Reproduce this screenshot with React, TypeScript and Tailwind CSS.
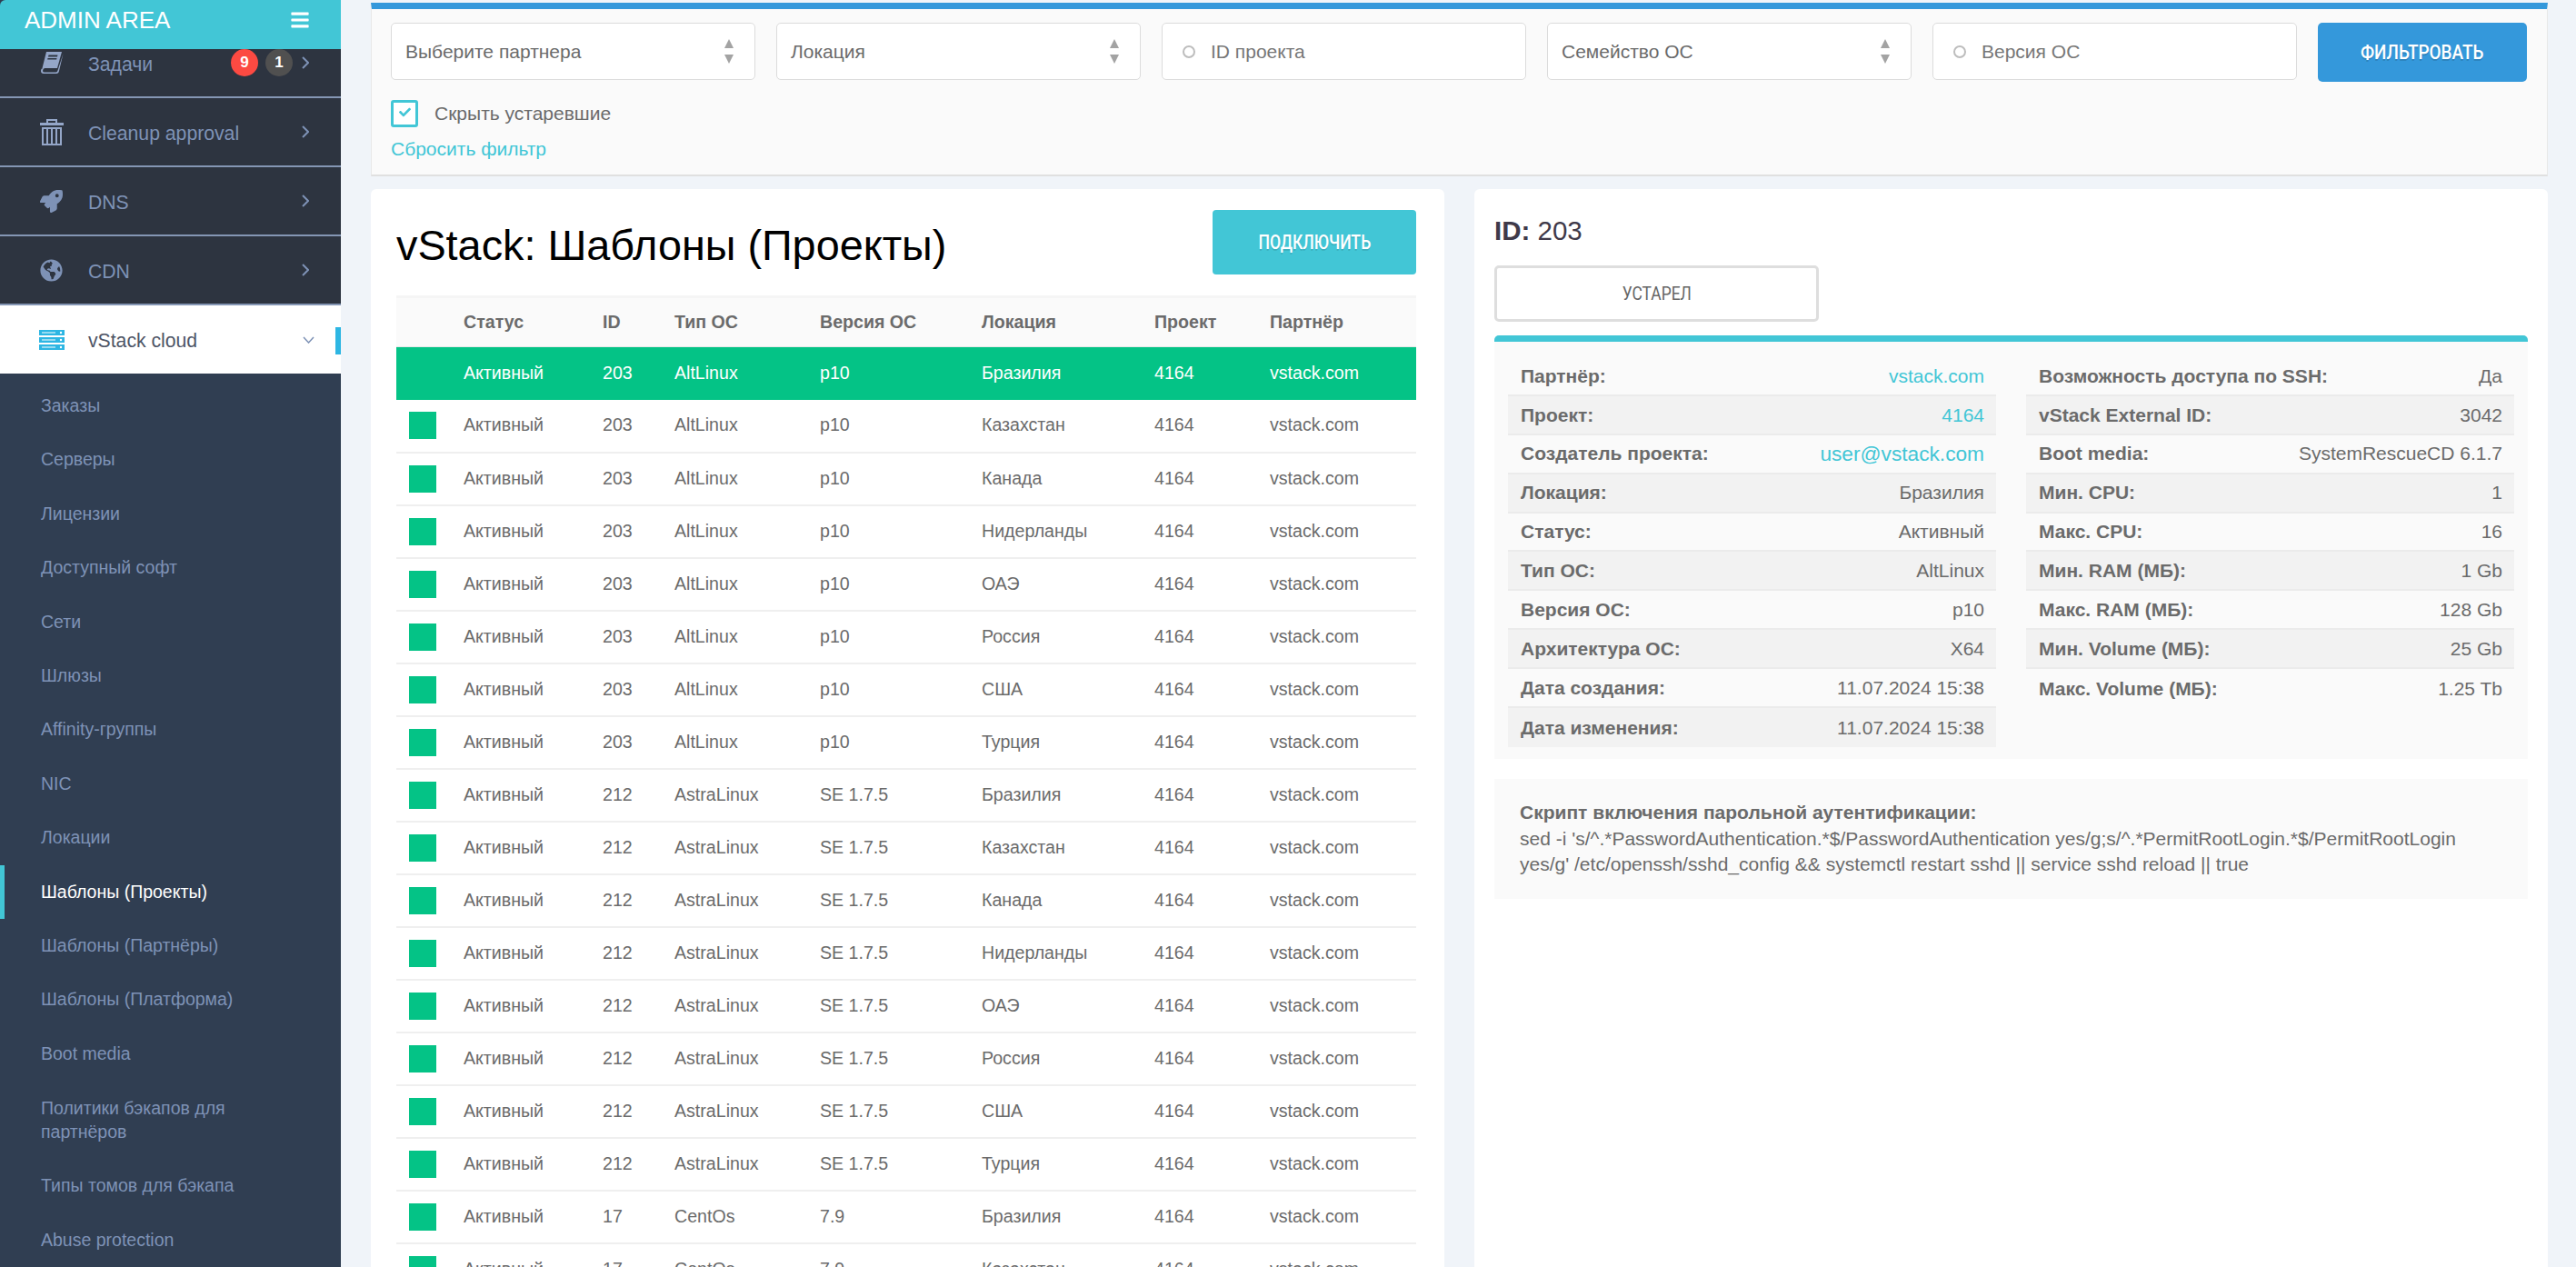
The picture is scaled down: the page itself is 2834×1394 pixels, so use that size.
import { FaRocket, FaGlobeAmericas, FaCheck, FaBars } from 'react-icons/fa'
import type { ReactNode } from 'react'

const sans = '[font-family:"Liberation_Sans",Arial,sans-serif]'

const subItems = [
  'Заказы', 'Серверы', 'Лицензии', 'Доступный софт', 'Сети', 'Шлюзы', 'Affinity-группы', 'NIC', 'Локации',
]
const subItemsAfter = ['Шаблоны (Партнёры)', 'Шаблоны (Платформа)', 'Boot media']

const locations = ['Бразилия', 'Казахстан', 'Канада', 'Нидерланды', 'ОАЭ', 'Россия', 'США', 'Турция']

const rows = [
  ...locations.map((loc) => ({ id: '203', os: 'AltLinux', ver: 'p10', loc })),
  ...locations.map((loc) => ({ id: '212', os: 'AstraLinux', ver: 'SE 1.7.5', loc })),
  { id: '17', os: 'CentOs', ver: '7.9', loc: 'Бразилия' },
  { id: '17', os: 'CentOs', ver: '7.9', loc: 'Казахстан' },
]

const leftInfo: [string, ReactNode][] = [
  ['Партнёр:', <span className="text-[#42c6d6]">vstack.com</span>],
  ['Проект:', <span className="text-[#42c6d6]">4164</span>],
  ['Создатель проекта:', <span className="text-[#42c6d6] text-[22.7px]">user@vstack.com</span>],
  ['Локация:', 'Бразилия'],
  ['Статус:', 'Активный'],
  ['Тип ОС:', 'AltLinux'],
  ['Версия ОС:', 'p10'],
  ['Архитектура ОС:', 'X64'],
  ['Дата создания:', '11.07.2024 15:38'],
  ['Дата изменения:', '11.07.2024 15:38'],
]

const rightInfo: [string, ReactNode][] = [
  ['Возможность доступа по SSH:', 'Да'],
  ['vStack External ID:', '3042'],
  ['Boot media:', 'SystemRescueCD 6.1.7'],
  ['Мин. CPU:', '1'],
  ['Макс. CPU:', '16'],
  ['Мин. RAM (МБ):', '1 Gb'],
  ['Макс. RAM (МБ):', '128 Gb'],
  ['Мин. Volume (МБ):', '25 Gb'],
  ['Макс. Volume (МБ):', '1.25 Tb'],
]

function BookIcon() {
  return (
    <svg width="26" height="24" viewBox="0 0 26 24" fill="#94a6c8">
      <path d="M7 0h17L19 18H2.500z" />
      <path d="M9.500 3.500h10l-.5 2h-10zM8.500 7h10l-.3 1.500h-10z" fill="#2d3440" />
      <path d="M25.500 2L21 21q-.5 3-3 3H4q-3 0-3-3t3-3h1q-2 1-2 3 0 1.500 2 1.500h12.500q1.500 0 2-2z" />
    </svg>
  )
}

function TrashIcon() {
  return (
    <svg width="26" height="29" viewBox="0 0 26 29" fill="#94a6c8">
      <path d="M7 0h12v4h7v3H0V4h7zm2 2v2h8V2z" fillRule="evenodd" />
      <path d="M2 9h22v20H2zm2 2v16h3V11zm5 0v16h3V11zm5 0v16h3V11zm5 0v16h3V11z" fillRule="evenodd" />
    </svg>
  )
}

function Chevron() {
  return (
    <svg width="8" height="14" viewBox="0 0 8 14" fill="none" stroke="#7e92b6" strokeWidth="2">
      <path d="M1 1l6 6-6 6" />
    </svg>
  )
}

function TopItem({ icon, label, badges }: { icon: ReactNode; label: string; badges?: boolean }) {
  return (
    <div className="h-[76px] flex items-center border-b-2 border-[#8496b4] text-[#7e92b6]">
      <div className="w-[97px] pl-[44px] flex items-center text-[25px]">{icon}</div>
      <span className="text-[21.2px] pt-[4px]">{label}</span>
      <div className="ml-auto flex items-center pr-[35px]">
        {badges && (
          <>
            <span className="w-[30px] h-[30px] rounded-full bg-[#fc4a42] text-white text-[17px] font-bold flex items-center justify-center">9</span>
            <span className="w-[30px] h-[30px] ml-[8px] mr-[10px] rounded-full bg-[#505050] text-white text-[17px] font-bold flex items-center justify-center">1</span>
          </>
        )}
        <Chevron />
      </div>
    </div>
  )
}

function SubItem({ label, active }: { label: string; active?: boolean }) {
  return (
    <div className={`h-[59.4px] shrink-0 flex items-center text-[19.5px] ${active ? 'border-l-[5px] pl-[40px] border-[#42c6d6] text-white' : 'pl-[45px] text-[#7e92b6]'}`}>
      {label}
    </div>
  )
}

function Sidebar() {
  return (
    <aside className="w-[375px] shrink-0 h-full bg-[#303e52] flex flex-col overflow-hidden">
      <div className="h-[54px] shrink-0 bg-[#42c6d6] rounded-tl-[6px] text-white flex items-center justify-between pl-[27px] pr-[34px]">
        <span className="text-[26px] leading-none -mt-[10px]">ADMIN AREA</span>
        <FaBars className="text-[22px] -mt-[10px]" />
      </div>
      <div className="bg-[#2d3440] h-[54px] shrink-0">
        <div className="h-[54px] -mt-[22px]">
          <TopItem icon={<BookIcon />} label="Задачи" badges />
        </div>
      </div>
      <div className="bg-[#2d3440] shrink-0">
        <TopItem icon={<TrashIcon />} label="Cleanup approval" />
        <TopItem icon={<FaRocket />} label="DNS" />
        <TopItem icon={<FaGlobeAmericas />} label="CDN" />
      </div>
      <div className="h-[75px] shrink-0 bg-white flex items-center relative text-[#4e5566]">
        <div className="w-[97px] pl-[43px]">
          <svg width="28" height="22" viewBox="0 0 28 22" fill="#2db6e3">
            <path d="M0 0h28v6H0zM0 8h28v6H0zM0 16h28v6H0z" />
            <path d="M3 2.500h15v1H3zM3 10.500h15v1H3zM3 18.500h15v1H3z" fill="#fff" />
            <circle cx="24" cy="3" r="1.200" fill="#fff" /><circle cx="24" cy="11" r="1.200" fill="#fff" /><circle cx="24" cy="19" r="1.200" fill="#fff" />
          </svg>
        </div>
        <span className="text-[21.2px] pt-[2px]">vStack cloud</span>
        <svg className="ml-auto mr-[29px]" width="13" height="8" viewBox="0 0 13 8" fill="none" stroke="#7e92b6" strokeWidth="1.500">
          <path d="M1 1l5.500 6L12 1" />
        </svg>
        <span className="absolute right-0 top-[24px] w-[6px] h-[30px] bg-[#2db6e3]" />
      </div>
      <div className="pt-[6px]">
        {subItems.map((s) => <SubItem key={s} label={s} />)}
        <SubItem label="Шаблоны (Проекты)" active />
        {subItemsAfter.map((s) => <SubItem key={s} label={s} />)}
        <div className="pl-[45px] pr-[60px] py-[17px] text-[19.5px] leading-[26px] text-[#7e92b6]">Политики бэкапов для партнёров</div>
        <SubItem label="Типы томов для бэкапа" />
        <SubItem label="Abuse protection" />
      </div>
    </aside>
  )
}

function Arrows() {
  return (
    <span className="flex flex-col gap-[7px] ml-auto">
      <span className="w-0 h-0 border-x-[5px] border-x-transparent border-b-[10px] border-b-[#a3a3a3]" />
      <span className="w-0 h-0 border-x-[5px] border-x-transparent border-t-[10px] border-t-[#a3a3a3]" />
    </span>
  )
}

function SelectBox({ label }: { label: string }) {
  return (
    <div className="w-[401px] shrink-0 h-[63px] bg-white border border-[#dcdcdc] rounded-[5px] flex items-center pl-[15px] pr-[23px] text-[21px] text-[#6b6b6b]">
      {label}
      <Arrows />
    </div>
  )
}

function InputBox({ label }: { label: string }) {
  return (
    <div className="w-[401px] shrink-0 h-[63px] bg-white border border-[#dcdcdc] rounded-[5px] flex items-center pl-[22px] text-[21px] text-[#777]">
      <span className="w-[14px] h-[14px] rounded-full border-2 border-[#bdbdbd] mr-[17px]" />
      {label}
    </div>
  )
}

function FilterPanel() {
  return (
    <section className="mt-[3px] ml-[33px] mr-[31px] h-[191px] bg-[#fafafa] border-t-[7px] border-t-[#3498db] border-b-2 border-b-[#e0e0e0] border-x border-x-[#e8e8e8] pl-[21px] pr-[21px] pt-[15px]">
      <div className="flex gap-[23px]">
        <SelectBox label="Выберите партнера" />
        <SelectBox label="Локация" />
        <InputBox label="ID проекта" />
        <SelectBox label="Семейство ОС" />
        <InputBox label="Версия ОС" />
        <button className="w-[230px] h-[65px] bg-[#3498db] rounded-[5px] text-white text-[22px] font-medium [font-family:Roboto,sans-serif] [text-shadow:0_2px_0_rgba(0,0,0,0.15)]"><span className="inline-block scale-x-[0.86]">ФИЛЬТРОВАТЬ</span></button>
      </div>
      <div className="flex items-center mt-[19px] text-[21px] text-[#6b6b6b]">
        <span className="w-[30px] h-[30px] border-[3px] border-[#42c6d6] rounded-[3px] bg-white flex items-start justify-center pt-[4px] mr-[18px] text-[#42c6d6] text-[13px]">
          <FaCheck />
        </span>
        Скрыть устаревшие
      </div>
      <div className="mt-[7px] text-[21px] text-[#42c6d6]">Сбросить фильтр</div>
    </section>
  )
}

function TemplatesTable() {
  return (
    <table className="w-[1122px] table-fixed border-t-[3px] border-[#f5f5f5] text-[19.6px]">
      <colgroup>
        <col className="w-[74px]" />
        <col className="w-[153px]" />
        <col className="w-[79px]" />
        <col className="w-[160px]" />
        <col className="w-[178px]" />
        <col className="w-[190px]" />
        <col className="w-[127px]" />
        <col />
      </colgroup>
      <thead>
        <tr className="h-[55px] bg-[#fafafa] text-left text-[#6b6b6b] border-b border-[#e8e8e8]">
          <th />
          <th className="font-bold">Статус</th>
          <th className="font-bold">ID</th>
          <th className="font-bold">Тип ОС</th>
          <th className="font-bold">Версия ОС</th>
          <th className="font-bold">Локация</th>
          <th className="font-bold">Проект</th>
          <th className="font-bold">Партнёр</th>
        </tr>
      </thead>
      <tbody>
        {rows.map((r, i) => (
          <tr key={i} className={i === 0 ? 'h-[58px] bg-[#04c386] text-white' : 'h-[58px] text-[#6b6b6b] border-b-2 border-[#efefef]'}>
            <td className="pl-[14px]">{i > 0 && <span className="block w-[30px] h-[30px] bg-[#04c386]" />}</td>
            <td>Активный</td>
            <td>{r.id}</td>
            <td>{r.os}</td>
            <td>{r.ver}</td>
            <td>{r.loc}</td>
            <td>4164</td>
            <td>vstack.com</td>
          </tr>
        ))}
      </tbody>
    </table>
  )
}

function InfoTable({ items }: { items: [string, ReactNode][] }) {
  return (
    <div className="w-[537px] shrink-0">
      {items.map(([k, v], i) => (
        <div key={k} className={`h-[42.9px] flex items-center justify-between pl-[14px] pr-[13px] text-[21px] text-[#6b6b6b] ${i < items.length - 1 ? 'border-b-2 border-[#ebebeb]' : ''} ${i % 2 ? 'bg-[#f2f2f2]' : ''}`}>
          <b>{k}</b>
          <span>{v}</span>
        </div>
      ))}
    </div>
  )
}

export default function App() {
  return (
    <div className={`flex w-[2834px] h-[1394px] overflow-hidden bg-[#f0f4f9] ${sans}`}>
      <Sidebar />
      <main className="flex-1 flex flex-col min-w-0">
        <FilterPanel />
        <div className="flex gap-[33px] ml-[33px] mr-[31px] mt-[14px] flex-1 min-h-0">
          <section className="w-[1181px] shrink-0 bg-white rounded-t-[6px] px-[28px] overflow-hidden">
            <div className="flex items-start justify-between h-[117px] pt-[23px]">
              <h1 className="text-[46.8px] text-black leading-none mt-[16px]">vStack: Шаблоны (Проекты)</h1>
              <button className="w-[224px] h-[71px] mr-[3px] bg-[#42c6d6] rounded-[4px] text-white text-[22px] font-medium [font-family:Roboto,sans-serif] [text-shadow:0_2px_0_rgba(0,0,0,0.1)]"><span className="inline-block scale-x-[0.8]">ПОДКЛЮЧИТЬ</span></button>
            </div>
            <TemplatesTable />
          </section>
          <section className="w-[1181px] shrink-0 bg-white rounded-t-[6px] px-[22px] pt-[29px]">
            <div className="text-[29.5px] leading-[34px] text-[#3f3a4a]"><b>ID:</b> 203</div>
            <button className="block mt-[21px] w-[357px] h-[62px] border-[3px] border-[#dedede] rounded-[5px] bg-white text-[#666] text-[20.5px] [font-family:Roboto,sans-serif]"><span className="inline-block scale-x-[0.85]">УСТАРЕЛ</span></button>
            <div className="mt-[15px] bg-[#fafafa] border-t-[7px] border-[#42c6d6] rounded-t-[5px] h-[466px] flex gap-[33px] px-[15px] pt-[17px]">
              <InfoTable items={leftInfo} />
              <InfoTable items={rightInfo} />
            </div>
            <div className="mt-[22px] h-[132px] bg-[#fafafa] px-[28px] pt-[23px] text-[21px] leading-[28.5px] text-[#6b6b6b]">
              <b>Скрипт включения парольной аутентификации:</b>
              <br />
              sed -i 's/^.*PasswordAuthentication.*$/PasswordAuthentication yes/g;s/^.*PermitRootLogin.*$/PermitRootLogin yes/g' /etc/openssh/sshd_config &amp;&amp; systemctl restart sshd || service sshd reload || true
            </div>
          </section>
        </div>
      </main>
    </div>
  )
}
